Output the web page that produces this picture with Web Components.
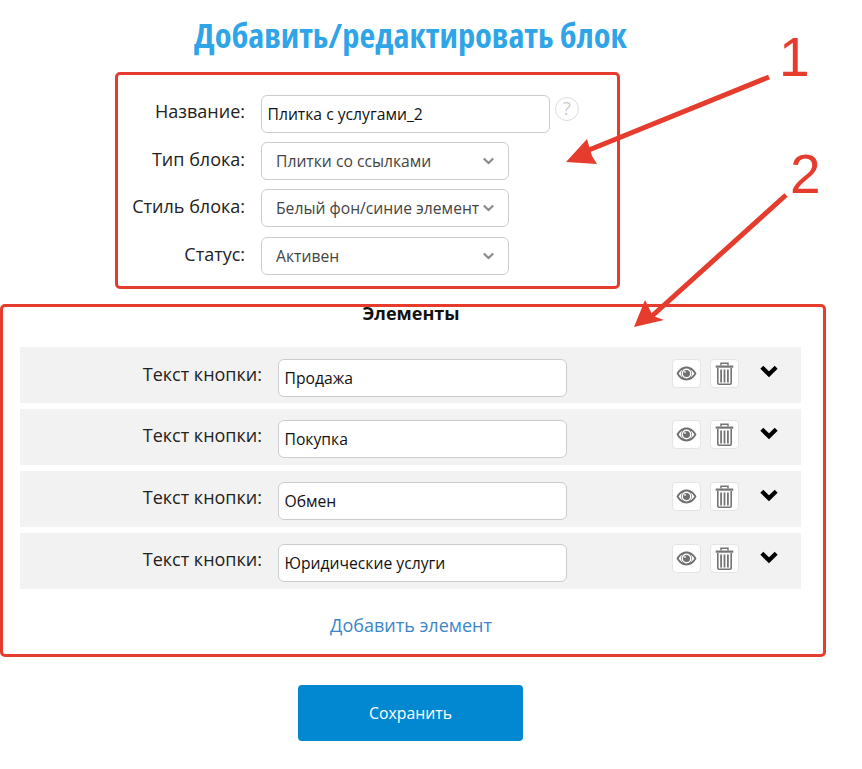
<!DOCTYPE html>
<html lang="ru"><head><meta charset="utf-8"><title>Блок</title>
<style>
html,body{margin:0;padding:0;background:#fff}
body{width:862px;height:769px;overflow:hidden;font-family:"Open Sans","Liberation Sans",sans-serif;position:relative}
</style></head><body>
<block-editor></block-editor>
<script>
const def=(name,html)=>{customElements.define(name,class extends HTMLElement{constructor(){super();const r=this.attachShadow({mode:'open'});r.innerHTML=typeof html==='function'?html(this):html;}})};

def('text-field',`<style>
:host{display:block;box-sizing:border-box;height:38px;border:1px solid #ccc;border-radius:6px;background:#fff;padding:0 5.500px;font:15.700px/36px "Open Sans",sans-serif;color:#111;white-space:nowrap;overflow:hidden}
</style><slot></slot>`);

def('select-field',`<style>
:host{display:flex;align-items:center;box-sizing:border-box;width:248px;height:38px;border:1px solid #ccc;border-radius:6px;background:#fff;padding:0 14px 0 14px;font:15.700px/36px "Open Sans",sans-serif;color:#444;white-space:nowrap}
.t{flex:1;overflow:hidden;min-width:0}
svg{flex:none;margin-left:3px;width:11px;height:8px}
</style><span class="t"><slot></slot></span><svg viewBox="0 0 11 8"><path d="M.8 1.500 5.500 6 10.200 1.500" fill="none" stroke="#8a8a8a" stroke-width="2.200"/></svg>`);

def('form-row',t=>`<style>
:host{display:flex;align-items:flex-start}
.l{width:130px;margin-right:16px;padding-top:var(--lt,2px);text-align:right;font:18px/30px "Open Sans",sans-serif;color:#222;flex:none;white-space:nowrap}
.c{display:flex;align-items:flex-start}
</style><div class="l">${t.getAttribute('label')}</div><div class="c"><slot></slot></div>`);

def('icon-btn',`<style>
:host{display:flex;align-items:center;justify-content:center;box-sizing:border-box;width:29px;height:29px;border:1px solid #e4e4e4;border-radius:4px;background:#fff}
</style><slot></slot>`);

def('element-row',t=>`<style>
:host{display:flex;align-items:flex-start;box-sizing:border-box;height:56px;background:#f2f2f2;padding-top:var(--p,11px)}
.l{width:242px;text-align:right;font:18px/30px "Open Sans",sans-serif;color:#222;flex:none;margin-right:16px;white-space:nowrap}
text-field{width:289px;flex:none;margin-right:105px}
icon-btn{margin-right:9px}
.ch{margin:var(--c,6px) 0 0 12px;width:18px;height:14px}
</style><div class="l">Текст кнопки:</div><text-field>${t.getAttribute('text')}</text-field>
<icon-btn><svg width="21" height="15" viewBox="0 0 21 15"><path fill-rule="evenodd" fill="#6f6f6f" d="M.5 7.500C3 3 6.500.6 10.500.6S18 3 20.500 7.500C18 12 14.500 14.400 10.500 14.400S3 12 .5 7.500ZM10.500 2.600a4.900 4.900 0 1 0 0 9.800 4.900 4.900 0 0 0 0-9.800ZM2.600 7.500c1.200 1.800 2.500 3.100 4 3.900a6 6 0 0 1 0-7.800c-1.500.8-2.800 2.100-4 3.900ZM18.400 7.500c-1.200-1.800-2.500-3.100-4-3.900a6 6 0 0 1 0 7.800c1.500-.8 2.800-2.100 4-3.900Z"/><circle cx="10.500" cy="7.500" r="3.500" fill="#6f6f6f"/><circle cx="9" cy="6" r="1.100" fill="#ddd"/></svg></icon-btn>
<icon-btn><svg width="19" height="23" viewBox="0 0 19 23"><path fill="none" stroke="#757575" stroke-width="1.500" d="M6 3.500V1.200h7v2.300"/><path fill="#757575" d="M.7 3.500h17.600v2.200H.7Z"/><path fill="none" stroke="#757575" stroke-width="1.600" d="M2.800 6V21c0 .7.4 1.200 1.200 1.200h11c.8 0 1.200-.5 1.200-1.200V6"/><path fill="#757575" d="M5.200 7.500h1.800V20.500H5.200ZM8.600 7.500h1.800V20.500H8.600ZM12 7.500h1.800V20.500H12Z"/></svg></icon-btn>
<svg class="ch" viewBox="0 0 18 14"><path d="M1.800 3.300 9 10.300 16.200 3.300" fill="none" stroke="#000" stroke-width="4.200"/></svg>`);

def('red-box',`<style>
:host{display:block;box-sizing:border-box;border:3px solid #e53c2e;border-radius:5px}
</style><slot></slot>`);

def('block-editor',`<style>
:host{display:block;width:862px;height:769px;position:relative;font-family:"Open Sans",sans-serif}
h1{margin:0;height:72px;box-sizing:border-box;padding-top:13px;width:821px;text-align:center;font:700 34.400px/44px "Open Sans",sans-serif;font-stretch:75%;color:#2fa5e8;white-space:nowrap}
.first{width:505px;height:217px;margin-left:115px;padding-top:20px}
.first .r{margin-left:-3px}
.first form-row+form-row{margin-top:9px}
.first form-row:last-child{margin-top:10px}
.q{width:24px;height:24px;margin:2px 0 0 5px;flex:none;border:1.500px solid #ddd;box-sizing:border-box;border-radius:50%;color:#ccc;font:400 18px/21px "Open Sans",sans-serif;text-align:center}
.second{width:826px;height:353px;margin-top:15px}
.second h2{margin:0;height:40px;text-align:center;font:700 18px/12px "Open Sans",sans-serif;color:#111;width:816px}
.list{margin:0 22px 0 17px;display:flex;flex-direction:column;gap:6px}
.add{text-align:center;width:816px;margin-top:24px;font:18px/24px "Open Sans",sans-serif;color:#3b86c8}
.save{width:225px;height:56px;margin:28px 0 0 298px;background:#0288d1;color:#fff;border-radius:4px;text-align:center;font:15.800px/56px "Open Sans",sans-serif}
.over{position:absolute;left:0;top:0;pointer-events:none}
.num{position:absolute;font:55px/55px "Liberation Sans",Arial,sans-serif;color:#e53c2e}
</style>
<h1>Добавить/редактировать блок</h1>
<red-box class="first">
<div class="r">
<form-row label="Название:" style="--lt:1px"><text-field style="width:289px">Плитка с услугами_2</text-field><div class="q">?</div></form-row>
<form-row label="Тип блока:"><select-field>Плитки со ссылками</select-field></form-row>
<form-row label="Стиль блока:"><select-field>Белый фон/синие элементы</select-field></form-row>
<form-row label="Статус:"><select-field>Активен</select-field></form-row>
</div>
</red-box>
<red-box class="second">
<h2>Элементы</h2>
<div class="list">
<element-row text="Продажа" style="--p:12px;--c:5px"></element-row>
<element-row text="Покупка"></element-row>
<element-row text="Обмен"></element-row>
<element-row text="Юридические услуги"></element-row>
</div>
<div class="add">Добавить элемент</div>
</red-box>
<div class="save">Сохранить</div>
<svg class="over" width="862" height="769" viewBox="0 0 862 769">
<path d="M769 77 584 152" stroke="#e53c2e" stroke-width="5" fill="none"/>
<path d="M566 162 587 139 592 156 597 164Z" fill="#e53c2e"/>
<path d="M786 195 652 316" stroke="#e53c2e" stroke-width="5" fill="none"/>
<path d="M634 327 645 300 653 316 664 320Z" fill="#e53c2e"/>
</svg>
<div class="num" style="left:779px;top:30px">1</div>
<div class="num" style="left:790px;top:147px">2</div>`);
</script></body></html>
